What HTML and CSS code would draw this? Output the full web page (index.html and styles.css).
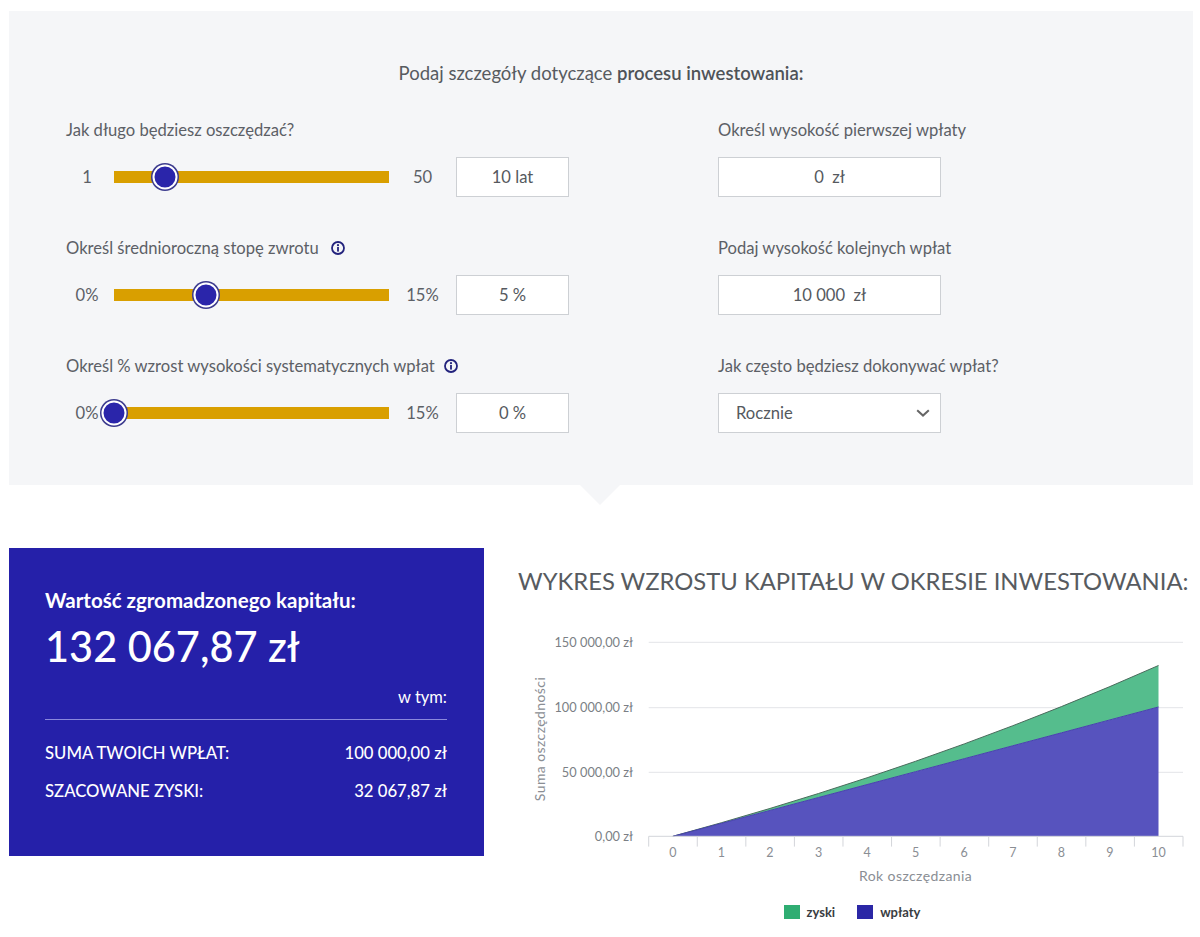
FILE: index.html
```html
<!DOCTYPE html>
<html lang="pl">
<head>
<meta charset="utf-8">
<title>Kalkulator inwestycji</title>
<link rel="stylesheet" href="styles.css">
</head>
<body>
<div class="page">
  <section class="panel">
    <h2 class="panel-title">Podaj szczegóły dotyczące <span class="strong">procesu inwestowania:</span></h2>
    <div class="form">
      <div class="col">
        <div class="field">
          <div class="label">Jak długo będziesz oszczędzać?</div>
          <div class="slider-row">
            <span class="min">1</span>
            <div class="track"><span class="thumb" style="left:18.4%"></span></div>
            <span class="max">50</span>
            <div class="box">10 lat</div>
          </div>
        </div>
        <div class="field">
          <div class="label">Określ średnioroczną stopę zwrotu
            <svg class="info" width="14" height="14" viewBox="0 0 14 14"><circle cx="7" cy="7" r="6" fill="none" stroke="#23237d" stroke-width="1.8"/><circle cx="7" cy="4.2" r="1.1" fill="#23237d"/><rect x="6.1" y="6" width="1.8" height="4.6" fill="#23237d"/></svg>
          </div>
          <div class="slider-row">
            <span class="min">0%</span>
            <div class="track"><span class="thumb" style="left:33.3%"></span></div>
            <span class="max">15%</span>
            <div class="box">5 %</div>
          </div>
        </div>
        <div class="field">
          <div class="label">Określ % wzrost wysokości systematycznych wpłat
            <svg class="info tight" width="14" height="14" viewBox="0 0 14 14"><circle cx="7" cy="7" r="6" fill="none" stroke="#23237d" stroke-width="1.8"/><circle cx="7" cy="4.2" r="1.1" fill="#23237d"/><rect x="6.1" y="6" width="1.8" height="4.6" fill="#23237d"/></svg>
          </div>
          <div class="slider-row">
            <span class="min">0%</span>
            <div class="track"><span class="thumb" style="left:0%"></span></div>
            <span class="max">15%</span>
            <div class="box">0 %</div>
          </div>
        </div>
      </div>
      <div class="col">
        <div class="field">
          <div class="label">Określ wysokość pierwszej wpłaty</div>
          <div class="box wide">0&nbsp; zł</div>
        </div>
        <div class="field">
          <div class="label">Podaj wysokość kolejnych wpłat</div>
          <div class="box wide">10 000&nbsp; zł</div>
        </div>
        <div class="field">
          <div class="label">Jak często będziesz dokonywać wpłat?</div>
          <div class="box wide select">
            <span>Rocznie</span>
            <svg width="14" height="8" viewBox="0 0 14 8"><polyline points="1.2,1.2 7,6.6 12.8,1.2" fill="none" stroke="#666" stroke-width="2"/></svg>
          </div>
        </div>
      </div>
    </div>
  </section>

  <section class="results">
    <div class="summary">
      <div class="sum-title">Wartość zgromadzonego kapitału:</div>
      <div class="sum-value">132 067,87 zł</div>
      <div class="sum-sub">w tym:</div>
      <div class="sum-rows">
        <div class="sum-row"><span>SUMA TWOICH WPŁAT:</span><span>100 000,00 zł</span></div>
        <div class="sum-row"><span>SZACOWANE ZYSKI:</span><span>32 067,87 zł</span></div>
      </div>
    </div>
    <div class="chart-col">
      <h3 class="chart-title">WYKRES WZROSTU KAPITAŁU W OKRESIE INWESTOWANIA:</h3>
      <svg class="chart" width="674" height="280" viewBox="0 0 674 280">
        <g stroke="#e3e4e8" stroke-width="1">
          <line x1="130.7" y1="32.3" x2="665" y2="32.3"/>
          <line x1="130.7" y1="97.7" x2="665" y2="97.7"/>
          <line x1="130.7" y1="162.3" x2="665" y2="162.3"/>
        </g>
        <polygon fill="#55bd8d" points="154.8,226.3 203.37,212.72 251.94,198.46 300.51,183.49 349.08,167.77 397.65,151.26 446.22,133.93 494.79,115.73 543.36,96.62 591.93,76.55 640.5,55.48 640.5,96.96 591.93,109.89 543.36,122.83 494.79,135.76 446.22,148.70 397.65,161.63 349.08,174.56 300.51,187.50 251.94,200.43 203.37,213.37"/>
        <polygon fill="#5753be" points="154.8,226.3 203.37,213.37 251.94,200.43 300.51,187.50 349.08,174.56 397.65,161.63 446.22,148.70 494.79,135.76 543.36,122.83 591.93,109.89 640.5,96.96 640.5,226.3"/>
        <polyline fill="none" stroke="#4a6b5c" stroke-width="1" points="154.8,226.3 203.37,212.72 251.94,198.46 300.51,183.49 349.08,167.77 397.65,151.26 446.22,133.93 494.79,115.73 543.36,96.62 591.93,76.55 640.5,55.48"/>
        <polyline fill="none" stroke="#4742ad" stroke-width="1" points="154.8,226.3 203.37,213.37 251.94,200.43 300.51,187.50 349.08,174.56 397.65,161.63 446.22,148.70 494.79,135.76 543.36,122.83 591.93,109.89 640.5,96.96"/>
        <g stroke="#d3d5da" stroke-width="1">
          <line x1="130.7" y1="226.3" x2="665" y2="226.3"/>
          <line x1="130.7" y1="226.3" x2="130.7" y2="236.6"/>
          <line x1="179.27" y1="226.3" x2="179.27" y2="236.6"/>
          <line x1="227.84" y1="226.3" x2="227.84" y2="236.6"/>
          <line x1="276.41" y1="226.3" x2="276.41" y2="236.6"/>
          <line x1="324.98" y1="226.3" x2="324.98" y2="236.6"/>
          <line x1="373.55" y1="226.3" x2="373.55" y2="236.6"/>
          <line x1="422.12" y1="226.3" x2="422.12" y2="236.6"/>
          <line x1="470.69" y1="226.3" x2="470.69" y2="236.6"/>
          <line x1="519.26" y1="226.3" x2="519.26" y2="236.6"/>
          <line x1="567.83" y1="226.3" x2="567.83" y2="236.6"/>
          <line x1="616.4" y1="226.3" x2="616.4" y2="236.6"/>
          <line x1="665" y1="226.3" x2="665" y2="236.6"/>
        </g>
        <g class="ylab" text-anchor="end">
          <text x="115" y="36.5">150 000,00 zł</text>
          <text x="115" y="101.9">100 000,00 zł</text>
          <text x="115" y="166.5">50 000,00 zł</text>
          <text x="115" y="230.5">0,00 zł</text>
        </g>
        <g class="xlab" text-anchor="middle">
          <text x="154.8" y="246.5">0</text>
          <text x="203.37" y="246.5">1</text>
          <text x="251.94" y="246.5">2</text>
          <text x="300.51" y="246.5">3</text>
          <text x="349.08" y="246.5">4</text>
          <text x="397.65" y="246.5">5</text>
          <text x="446.22" y="246.5">6</text>
          <text x="494.79" y="246.5">7</text>
          <text x="543.36" y="246.5">8</text>
          <text x="591.93" y="246.5">9</text>
          <text x="640.5" y="246.5">10</text>
        </g>
        <text class="axis-title" x="397.6" y="271" text-anchor="middle">Rok oszczędzania</text>
        <text class="axis-title" transform="translate(27 129) rotate(-90)" text-anchor="middle">Suma oszczędności</text>
      </svg>
      <div class="legend">
        <span class="leg-item"><span class="swatch green"></span>zyski</span>
        <span class="leg-item"><span class="swatch blue"></span>wpłaty</span>
      </div>
    </div>
  </section>
</div>
</body>
</html>
```

FILE: styles.css
```css
* { box-sizing: border-box; }

body {
  margin: 0;
  background: #ffffff;
  font-family: Lato, "Open Sans", "Liberation Sans", sans-serif;
  color: #5c6066;
}

.page {
  padding: 11px 7px 0 9px;
}

/* ---------- input panel ---------- */
.panel {
  position: relative;
  background: #f5f6f8;
  padding: 50px 0 52px;
}

.panel::after {
  content: "";
  position: absolute;
  left: 571px;
  top: 100%;
  border-left: 20px solid transparent;
  border-right: 20px solid transparent;
  border-top: 20px solid #f5f6f8;
}

.panel-title {
  margin: 0 0 35px;
  font-size: 18.5px;
  line-height: 24px;
  font-weight: 400;
  text-align: center;
  color: #575b60;
}

.panel-title .strong {
  font-weight: 600;
  color: #4f5358;
}

.form {
  display: grid;
  grid-template-columns: 503px 223px;
  column-gap: 149px;
  padding-left: 57px;
}

.col {
  display: flex;
  flex-direction: column;
  gap: 41px;
}

.label {
  display: flex;
  align-items: center;
  gap: 12px;
  height: 20px;
  margin-bottom: 17px;
  font-size: 16.6px;
  line-height: 20px;
  color: #5c6066;
  white-space: nowrap;
}

.info { flex: none; }
.info.tight { margin-left: -3px; }

.slider-row {
  display: flex;
  align-items: center;
  height: 40px;
}

.min {
  width: 42px;
  margin-right: 6px;
  text-align: center;
  font-size: 16.6px;
  color: #5c6066;
}

.track {
  position: relative;
  width: 275px;
  height: 12px;
  background: #d99f00;
}

.thumb {
  position: absolute;
  top: 50%;
  width: 25px;
  height: 25px;
  border-radius: 50%;
  background: #2a25aa;
  border: 2.5px solid #ffffff;
  box-shadow: 0 0 0 1.5px #3c3b8e;
  transform: translate(-50%, -50%);
}

.max {
  width: 67px;
  text-align: center;
  font-size: 16.6px;
  color: #5c6066;
}

.box {
  width: 113px;
  height: 40px;
  background: #ffffff;
  border: 1px solid #cdd0d4;
  font-size: 16.6px;
  line-height: 38px;
  text-align: center;
  color: #55595e;
}

.box.wide { width: 223px; }

.box.select {
  display: flex;
  align-items: center;
  justify-content: space-between;
  padding: 0 10px 0 17px;
  text-align: left;
}

/* ---------- results ---------- */
.results {
  display: flex;
  margin-top: 63px;
}

.summary {
  flex: none;
  width: 475px;
  height: 308px;
  background: #2520a9;
  color: #ffffff;
  padding: 40px 37px 0 36px;
}

.sum-title {
  font-size: 20.5px;
  line-height: 24px;
  font-weight: 700;
}

.sum-value {
  margin-top: 10px;
  font-size: 41.5px;
  line-height: 48px;
  font-weight: 500;
}

.sum-sub {
  margin-top: 17px;
  font-size: 16.5px;
  line-height: 20px;
  text-align: right;
  padding-bottom: 12px;
  border-bottom: 1px solid #8a88dc;
}

.sum-rows {
  display: flex;
  flex-direction: column;
  gap: 18px;
  margin-top: 23px;
}

.sum-row {
  display: flex;
  justify-content: space-between;
  font-size: 16.7px;
  line-height: 20px;
  font-weight: 500;
}

.chart-col {
  display: flex;
  flex-direction: column;
  margin-left: 34px;
  width: 674px;
}

.chart-title {
  margin: 18px 0 14px;
  font-size: 23.8px;
  line-height: 30px;
  font-weight: 400;
  color: #575b60;
  white-space: nowrap;
}

.chart { display: block; }

.chart text {
  font-family: Lato, "Open Sans", sans-serif;
}

.ylab text {
  font-size: 12.8px;
  fill: #7b7f85;
}

.xlab text {
  font-size: 12.5px;
  fill: #8a8e94;
}

.axis-title {
  font-size: 14px;
  fill: #8a8e94;
  letter-spacing: 0.4px;
}

.legend {
  display: flex;
  justify-content: center;
  gap: 22px;
  margin-top: 14px;
  padding-right: 6px;
}

.leg-item {
  display: flex;
  align-items: center;
  gap: 7px;
  font-size: 13px;
  line-height: 16px;
  font-weight: 700;
  color: #3a3d42;
}

.swatch {
  width: 16px;
  height: 14px;
}

.swatch.green { background: #2fad72; }
.swatch.blue { background: #2b27a6; }
```
